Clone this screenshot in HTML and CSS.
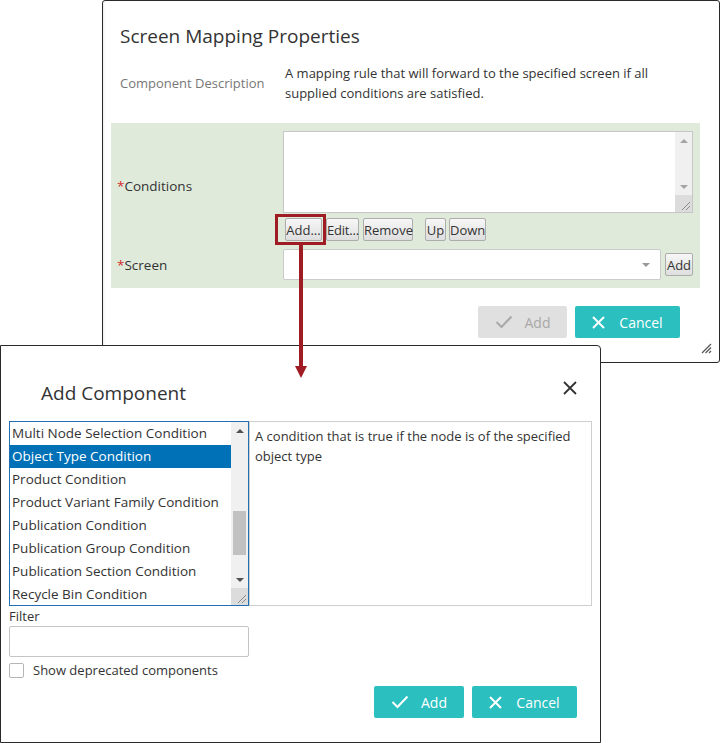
FILE: index.html
```html
<!DOCTYPE html>
<html lang="en">
<head>
<meta charset="utf-8">
<title>Screen Mapping Properties</title>
<link rel="stylesheet" href="styles.css">
</head>
<body>
<div class="stage">

  <div class="win win-top">
    <h1 class="win-title top-title">Screen Mapping Properties</h1>
    <div class="desc-row">
      <div class="desc-label">Component Description</div>
      <div class="desc-text">A mapping rule that will forward to the specified screen if all supplied conditions are satisfied.</div>
    </div>

    <div class="panel">
      <div class="field-label"><span class="req">*</span>Conditions</div>
      <div class="field">
        <div class="textarea">
          <div class="ta-body"></div>
          <div class="vscroll light">
            <span class="sb-btn"><span class="tri up"></span></span>
            <span class="sb-track"></span>
            <span class="sb-btn"><span class="tri down"></span></span>
            <span class="sb-grip">
              <svg width="17" height="17" viewBox="0 0 17 17"><path d="M15 7 L7 15 M15 11 L11 15" stroke="#8a8a8a" stroke-width="1" fill="none"/></svg>
            </span>
          </div>
        </div>
        <div class="btn-row">
          <button class="lbtn w-add">Add...</button>
          <button class="lbtn w-edit">Edit...</button>
          <button class="lbtn w-remove">Remove</button>
          <button class="lbtn w-up gap-l">Up</button>
          <button class="lbtn w-down">Down</button>
        </div>
      </div>

      <div class="field-label"><span class="req">*</span>Screen</div>
      <div class="field screen-field">
        <div class="select"><span class="tri down select-tri"></span></div>
        <button class="lbtn w-sadd">Add</button>
      </div>
    </div>

    <div class="footer top-footer">
      <button class="btn btn-add disabled">
        <svg class="ic-check" width="18" height="14" viewBox="0 0 18 14"><path d="M1.5 7 L6.5 12 L16.5 1.5" fill="none" stroke="currentColor" stroke-width="2"/></svg>
        <span>Add</span>
      </button>
      <button class="btn btn-cancel">
        <svg class="ic-x" width="13" height="13" viewBox="0 0 13 13"><path d="M1 1 L12 12 M12 1 L1 12" fill="none" stroke="currentColor" stroke-width="2"/></svg>
        <span>Cancel</span>
      </button>
    </div>

    <svg class="win-grip" width="11" height="11" viewBox="0 0 11 11"><path d="M10 1 L1 10 M10 4.5 L4.5 10 M10 8 L8 10" stroke="#555" stroke-width="1.2" fill="none"/></svg>
  </div>

  <div class="win win-bottom">
    <div class="bw-head">
      <h2 class="win-title">Add Component</h2>
      <svg class="close" width="14" height="14" viewBox="0 0 14 14"><path d="M1 1 L13 13 M13 1 L1 13" fill="none" stroke="#333" stroke-width="1.8"/></svg>
    </div>

    <div class="bw-body">
      <div class="list">
        <ul class="items">
          <li class="item">Multi Node Selection Condition</li>
          <li class="item sel">Object Type Condition</li>
          <li class="item">Product Condition</li>
          <li class="item">Product Variant Family Condition</li>
          <li class="item">Publication Condition</li>
          <li class="item">Publication Group Condition</li>
          <li class="item">Publication Section Condition</li>
          <li class="item">Recycle Bin Condition</li>
        </ul>
        <div class="vscroll dark">
          <span class="sb-btn"><span class="tri up"></span></span>
          <span class="sb-track"><span class="sb-thumb"></span></span>
          <span class="sb-btn"><span class="tri down"></span></span>
          <span class="sb-grip">
            <svg width="17" height="17" viewBox="0 0 17 17"><path d="M15 7 L7 15 M15 11 L11 15" stroke="#8a8a8a" stroke-width="1" fill="none"/></svg>
          </span>
        </div>
      </div>
      <div class="desc-box">A condition that is true if the node is of the specified object type</div>
    </div>

    <div class="filter-label">Filter</div>
    <div class="filter-input"></div>
    <div class="check-row">
      <span class="checkbox"></span>
      <span class="check-label">Show deprecated components</span>
    </div>

    <div class="footer bottom-footer">
      <button class="btn btn-add2">
        <svg class="ic-check" width="18" height="14" viewBox="0 0 18 14"><path d="M1.5 7 L6.5 12 L16.5 1.5" fill="none" stroke="currentColor" stroke-width="2"/></svg>
        <span>Add</span>
      </button>
      <button class="btn btn-cancel">
        <svg class="ic-x" width="13" height="13" viewBox="0 0 13 13"><path d="M1 1 L12 12 M12 1 L1 12" fill="none" stroke="currentColor" stroke-width="2"/></svg>
        <span>Cancel</span>
      </button>
    </div>
  </div>

  <div class="callout-box"></div>
  <div class="callout-line"></div>
  <div class="callout-head"></div>
</div>
</body>
</html>
```

FILE: styles.css
```css
* { box-sizing: border-box; }

body {
  margin: 0;
  font-family: "Open Sans", "Noto Sans", sans-serif;
  color: #333;
  background: #fff;
}

.stage {
  position: relative;
  width: 721px;
  height: 743px;
  overflow: hidden;
}

.win {
  position: absolute;
  background: #fff;
  border: 1px solid #2a2a2a;
}

.win-top {
  left: 102px;
  top: 0;
  width: 618px;
  height: 363px;
  border-radius: 3px;
  box-shadow: inset 2px 0 2px -1px rgba(0,0,0,0.08);
}

.win-bottom {
  left: 0;
  top: 345px;
  width: 601px;
  height: 398px;
  border-radius: 0 4px 0 0;
  display: flex;
  flex-direction: column;
}

.win-title {
  margin: 0;
  font-size: 19px;
  font-weight: 400;
  line-height: 28px;
  color: #333;
}

.top-title {
  padding: 21px 0 0 17px;
}

.desc-row {
  display: grid;
  grid-template-columns: 165px 400px;
  align-items: center;
  margin-top: 13px;
  padding-left: 17px;
}

.desc-label {
  color: #777;
  font-size: 13px;
}

.desc-text {
  font-size: 13px;
  line-height: 20px;
}

.panel {
  margin: 20px 19px 0 8px;
  background: #dfeadb;
  padding: 8px 7px 8px 6px;
  display: grid;
  grid-template-columns: 166px 1fr;
  row-gap: 8px;
  align-items: center;
}

.field-label {
  font-size: 13.5px;
}

.req {
  color: #d22b2b;
}

.textarea {
  height: 82px;
  border: 1px solid #c6c6c6;
  background: #fff;
  display: flex;
}

.ta-body { flex: 1; }

.vscroll {
  width: 17px;
  background: #f0f0f0;
  display: flex;
  flex-direction: column;
}

.sb-btn {
  height: 17px;
  display: flex;
  align-items: center;
  justify-content: center;
}

.sb-track {
  flex: 1;
  display: flex;
  flex-direction: column;
  align-items: center;
}

.sb-thumb {
  width: 13px;
  height: 44px;
  margin-top: 72px;
  background: #c1c1c1;
}

.sb-grip {
  height: 17px;
  background: #dcdcdc;
  display: block;
}

.sb-grip svg { display: block; }

.tri {
  width: 0;
  height: 0;
  border-left: 4px solid transparent;
  border-right: 4px solid transparent;
}

.tri.up { border-bottom: 4px solid #a3a3a3; }
.tri.down { border-top: 4px solid #a3a3a3; }

.dark .tri.up { border-bottom-color: #505050; }
.dark .tri.down { border-top-color: #505050; }

.btn-row {
  display: flex;
  margin-top: 5px;
  padding-left: 2px;
}

.lbtn {
  height: 23px;
  padding: 0;
  border: 1px solid #adadad;
  border-radius: 2px;
  background: linear-gradient(#f7f7f7, #dedede);
  font-family: inherit;
  font-size: 13px;
  color: #333;
  line-height: 20px;
  margin-right: 4px;
  white-space: nowrap;
}

.w-add { width: 37px; }
.w-edit { width: 33px; letter-spacing: -0.2px; }
.w-remove { width: 50px; margin-right: 12px; }
.w-up { width: 21px; margin-right: 3px; }
.w-down { width: 37px; }
.w-sadd { width: 28px; margin: 0; }

.screen-field {
  display: flex;
  align-items: center;
}

.select {
  flex: 1;
  height: 31px;
  margin-right: 4px;
  border: 1px solid #cbcbcb;
  border-radius: 2px;
  background: #fff;
  display: flex;
  align-items: center;
  justify-content: flex-end;
  padding-right: 10px;
}

.select-tri {
  border-left-width: 4.5px;
  border-right-width: 4.5px;
  border-top-color: #999 !important;
}

.footer {
  display: flex;
  justify-content: flex-end;
  gap: 8px;
}

.top-footer {
  margin-top: 18px;
  padding-right: 39px;
}

.btn {
  height: 32px;
  border: none;
  border-radius: 2px;
  background: #2bbfbf;
  color: #fff;
  font-family: inherit;
  font-size: 14px;
  display: flex;
  align-items: center;
  justify-content: center;
  gap: 12px;
  padding: 0;
}

.btn-add { width: 89px; }
.btn-add2 { width: 90px; }
.btn-cancel { width: 105px; gap: 14px; }

.btn.disabled {
  background: #e0e0e0;
  color: #a8a8a8;
}

.ic-check, .ic-x { display: block; }

.win-grip {
  position: absolute;
  right: 7px;
  bottom: 8px;
}

.bw-head {
  display: flex;
  justify-content: space-between;
  align-items: flex-start;
  padding: 33px 23px 0 40px;
}

.close {
  margin-top: 2px;
}

.bw-body {
  display: flex;
  height: 185px;
  margin: 14px 0 0 8px;
}

.list {
  width: 240px;
  border: 1px solid #1f6fb2;
  display: flex;
  overflow: hidden;
}

.items {
  flex: 1;
  list-style: none;
  margin: 0;
  padding: 0;
  overflow: hidden;
}

.item {
  height: 23px;
  line-height: 23px;
  padding-left: 2px;
  font-size: 13.5px;
  white-space: nowrap;
}

.item.sel {
  background: #0070b7;
  color: #fff;
}

.desc-box {
  width: 343px;
  border: 1px solid #cfcfcf;
  padding: 4px 5px;
  font-size: 13px;
  line-height: 20px;
}

.filter-label {
  margin-left: 8px;
  font-size: 13px;
  line-height: 20px;
}

.filter-input {
  width: 240px;
  height: 31px;
  margin-left: 8px;
  border: 1px solid #c4c4c4;
  border-radius: 2px;
}

.check-row {
  display: flex;
  align-items: center;
  gap: 9px;
  margin: 6px 0 0 8px;
  height: 15px;
}

.checkbox {
  width: 15px;
  height: 15px;
  border: 1px solid #b5b5b5;
  border-radius: 2px;
  background: #fff;
}

.check-label {
  font-size: 13px;
  line-height: 15px;
}

.bottom-footer {
  margin-top: 8px;
  padding-right: 23px;
}

.callout-box {
  position: absolute;
  left: 275px;
  top: 214px;
  width: 51px;
  height: 31px;
  border: 3px solid #a01c24;
}

.callout-line {
  position: absolute;
  left: 299px;
  top: 245px;
  width: 4px;
  height: 122px;
  background: #a01c24;
}

.callout-head {
  position: absolute;
  left: 295px;
  top: 366px;
  width: 0;
  height: 0;
  border-left: 6px solid transparent;
  border-right: 6px solid transparent;
  border-top: 12px solid #a01c24;
}
```
